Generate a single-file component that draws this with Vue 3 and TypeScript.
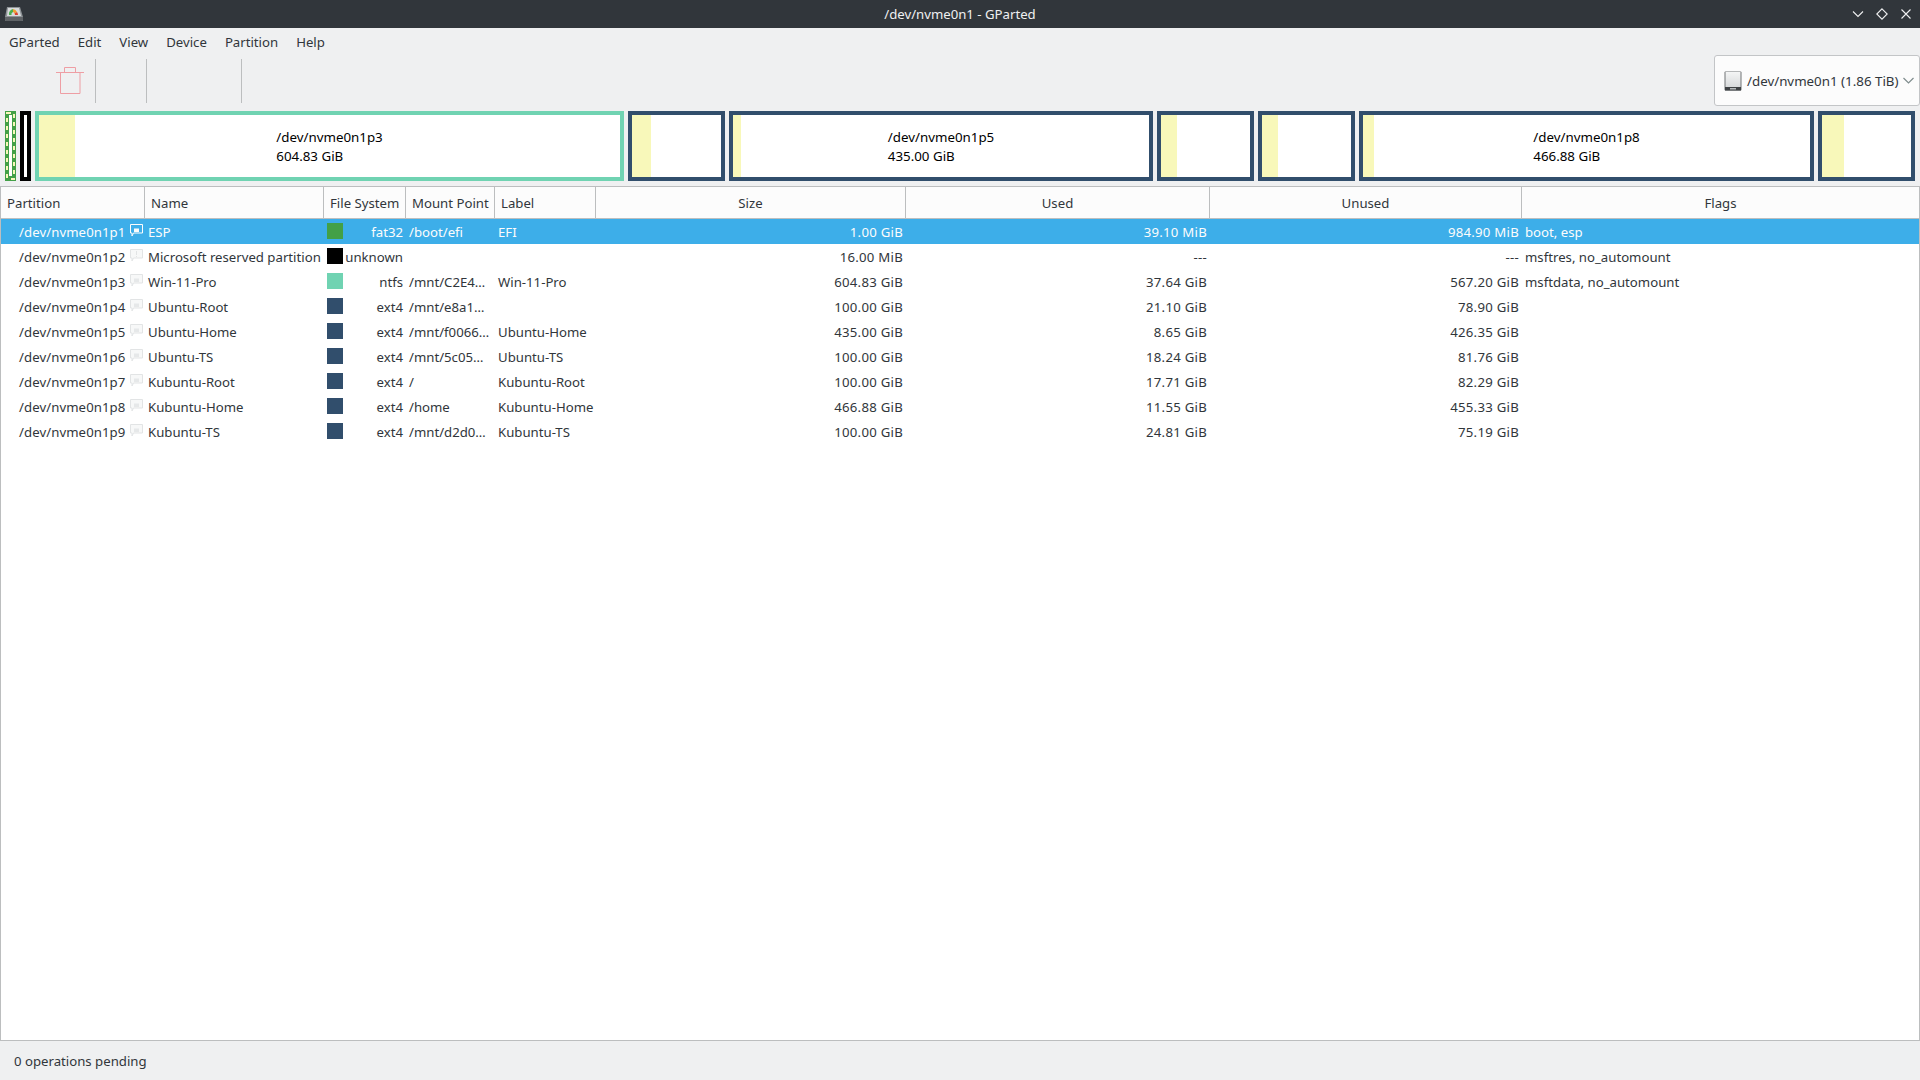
<script setup lang="ts">
interface Seg { name?: string; size?: string; width: number; used: number; color: string }
interface Row { part: string; name: string; color: string; fs: string; mount: string; label: string; size: string; used: string; unused: string; flags: string; warn?: boolean }

const menus = ['GParted', 'Edit', 'View', 'Device', 'Partition', 'Help']
const seps = [95, 146, 241]
const sepGaps = seps.map((x, i) => (i === 0 ? x : x - seps[i - 1] - 1))

const navy = '#314e6c'
const teal = '#70d3b2'
const segs: Seg[] = [
  { name: '/dev/nvme0n1p3', size: '604.83 GiB', width: 589, used: 36, color: teal },
  { width: 97, used: 19, color: navy },
  { name: '/dev/nvme0n1p5', size: '435.00 GiB', width: 424, used: 8, color: navy },
  { width: 97, used: 16, color: navy },
  { width: 97, used: 16, color: navy },
  { name: '/dev/nvme0n1p8', size: '466.88 GiB', width: 455, used: 11, color: navy },
  { width: 97, used: 22, color: navy }
]

const columns = [
  { title: 'Partition', center: false },
  { title: 'Name', center: false },
  { title: 'File System', center: false },
  { title: 'Mount Point', center: false },
  { title: 'Label', center: false },
  { title: 'Size', center: true },
  { title: 'Used', center: true },
  { title: 'Unused', center: true },
  { title: 'Flags', center: true }
]

const rows: Row[] = [
  { part: '/dev/nvme0n1p1', name: 'ESP', color: '#43a047', fs: 'fat32', mount: '/boot/efi', label: 'EFI', size: '1.00 GiB', used: '39.10 MiB', unused: '984.90 MiB', flags: 'boot, esp' },
  { part: '/dev/nvme0n1p2', name: 'Microsoft reserved partition', color: '#000000', fs: 'unknown', mount: '', label: '', size: '16.00 MiB', used: '---', unused: '---', flags: 'msftres, no_automount', warn: true },
  { part: '/dev/nvme0n1p3', name: 'Win-11-Pro', color: teal, fs: 'ntfs', mount: '/mnt/C2E4…', label: 'Win-11-Pro', size: '604.83 GiB', used: '37.64 GiB', unused: '567.20 GiB', flags: 'msftdata, no_automount' },
  { part: '/dev/nvme0n1p4', name: 'Ubuntu-Root', color: navy, fs: 'ext4', mount: '/mnt/e8a1…', label: '', size: '100.00 GiB', used: '21.10 GiB', unused: '78.90 GiB', flags: '' },
  { part: '/dev/nvme0n1p5', name: 'Ubuntu-Home', color: navy, fs: 'ext4', mount: '/mnt/f0066…', label: 'Ubuntu-Home', size: '435.00 GiB', used: '8.65 GiB', unused: '426.35 GiB', flags: '' },
  { part: '/dev/nvme0n1p6', name: 'Ubuntu-TS', color: navy, fs: 'ext4', mount: '/mnt/5c05…', label: 'Ubuntu-TS', size: '100.00 GiB', used: '18.24 GiB', unused: '81.76 GiB', flags: '' },
  { part: '/dev/nvme0n1p7', name: 'Kubuntu-Root', color: navy, fs: 'ext4', mount: '/', label: 'Kubuntu-Root', size: '100.00 GiB', used: '17.71 GiB', unused: '82.29 GiB', flags: '' },
  { part: '/dev/nvme0n1p8', name: 'Kubuntu-Home', color: navy, fs: 'ext4', mount: '/home', label: 'Kubuntu-Home', size: '466.88 GiB', used: '11.55 GiB', unused: '455.33 GiB', flags: '' },
  { part: '/dev/nvme0n1p9', name: 'Kubuntu-TS', color: navy, fs: 'ext4', mount: '/mnt/d2d0…', label: 'Kubuntu-TS', size: '100.00 GiB', used: '24.81 GiB', unused: '75.19 GiB', flags: '' }
]
</script>

<template>
  <div class="window">
    <header class="titlebar">
      <svg class="app-icon" width="20" height="16" viewBox="0 0 20 16">
        <path d="M3 1h13l3 10v3a1 1 0 0 1-1 1H2a1 1 0 0 1-1-1v-3z" fill="#8f9497" />
        <path d="M1 11h18v3a1 1 0 0 1-1 1H2a1 1 0 0 1-1-1z" fill="#5f6366" />
        <path d="M4 2h11l2 8H3z" fill="#d8dbdc" />
        <path d="M5 9a5 5 0 0 1 4-6v3a2.500 2.500 0 0 0-1.500 3z" fill="#4caf50" />
        <path d="M9 3a5 5 0 0 1 4 3l-2.500 1.500A2.500 2.500 0 0 0 9 6z" fill="#f0a030" />
        <path d="M13 6a5 5 0 0 1 1 3h-3a3 3 0 0 0-.5-1.500z" fill="#d9432f" />
      </svg>
      <span class="title">/dev/nvme0n1 - GParted</span>
      <div class="win-buttons">
        <svg width="12" height="12" viewBox="0 0 12 12"><path d="M1 3.500l5 5 5-5" fill="none" stroke="#eff0f1" stroke-width="1.100" /></svg>
        <svg width="12" height="12" viewBox="0 0 12 12"><path d="M6 .8L11.200 6 6 11.200 .8 6z" fill="none" stroke="#eff0f1" stroke-width="1.100" /></svg>
        <svg width="12" height="12" viewBox="0 0 12 12"><path d="M1.500 1.500l9 9M10.500 1.500l-9 9" fill="none" stroke="#eff0f1" stroke-width="1.100" /></svg>
      </div>
    </header>

    <nav class="menubar">
      <span v-for="m in menus" :key="m" class="menu-item">{{ m }}</span>
    </nav>

    <div class="toolbar">
      <svg class="trash" width="28" height="28" viewBox="0 0 28 28">
        <path d="M0 6.500h28M8.500 6V1.500h11V6M4.500 7v20.500h19.500V7" fill="none" stroke="#ee9ea4" stroke-width="1" />
      </svg>
      <span
        v-for="(gap, i) in sepGaps"
        :key="i"
        class="tool-sep"
        :style="{ marginLeft: (i === 0 ? gap - 84 : gap) + 'px' }"
      ></span>
      <div class="device-combo">
        <svg class="drive" width="18" height="20" viewBox="0 0 18 20">
          <defs>
            <linearGradient id="driveFace" x1="0" y1="0" x2="0" y2="1">
              <stop offset="0" stop-color="#f4f5f5" />
              <stop offset="1" stop-color="#d8dadb" />
            </linearGradient>
          </defs>
          <rect x="0.500" y="0.500" width="17" height="19" rx="1" fill="#6f7274" />
          <rect x="1.500" y="1" width="15" height="15" fill="url(#driveFace)" />
          <rect x="1" y="16" width="16" height="3.500" fill="#3f4244" />
          <rect x="6" y="17" width="6" height="1.500" fill="#b5b8ba" />
        </svg>
        <span class="device-name">/dev/nvme0n1 (1.86 TiB)</span>
        <svg class="chevron" width="11" height="7" viewBox="0 0 11 7"><path d="M.5 1l5 5 5-5" fill="none" stroke="#7f8c8d" stroke-width="1.200" /></svg>
      </div>
    </div>

    <div class="diskbar">
      <svg class="seg-boot" width="11" height="70" viewBox="0 0 11 70">
        <rect width="11" height="70" fill="#43a047" />
        <rect x="4" y="4" width="3" height="61" fill="#fff" />
        <path d="M1 2h5M6 68h4" stroke="#f8f8ba" stroke-width="2" />
        <path d="M2 7v62M9 3v62" stroke="#f8f8ba" stroke-width="2" stroke-dasharray="4 4" />
      </svg>
      <div class="seg seg-reserved"></div>
      <div
        v-for="(s, i) in segs"
        :key="i"
        class="seg"
        :style="{ width: s.width + 'px', borderColor: s.color }"
      >
        <div class="seg-used" :style="{ width: s.used + 'px' }"></div>
        <div v-if="s.name" class="seg-label">
          <span>{{ s.name }}</span>
          <span>{{ s.size }}</span>
        </div>
      </div>
    </div>

    <section class="tree">
      <div class="tree-row tree-head">
        <div
          v-for="c in columns"
          :key="c.title"
          class="head-cell"
          :class="{ center: c.center }"
        >{{ c.title }}</div>
      </div>
      <div
        v-for="(r, i) in rows"
        :key="r.part"
        class="tree-row data-row"
        :class="{ selected: i === 0 }"
      >
        <div class="cell cell-part">
          <span>{{ r.part }}</span>
          <svg class="lock" width="13" height="13" viewBox="0 0 13 13">
            <path d="M.5.500h12v8.500H3.500L2 12V9H.5z" class="lock-line" />
            <path v-if="r.warn" d="M6.500 2v4M6.500 7v1" fill="none" class="lock-line" />
            <rect v-else x="4" y="4.500" width="5" height="3.500" class="lock-fill" />
          </svg>
        </div>
        <div class="cell">{{ r.name }}</div>
        <div class="cell cell-fs">
          <span class="swatch" :style="{ background: r.color }"></span>
          <span class="fs-name">{{ r.fs }}</span>
        </div>
        <div class="cell">{{ r.mount }}</div>
        <div class="cell">{{ r.label }}</div>
        <div class="cell right">{{ r.size }}</div>
        <div class="cell right">{{ r.used }}</div>
        <div class="cell right">{{ r.unused }}</div>
        <div class="cell">{{ r.flags }}</div>
      </div>
    </section>

    <footer class="statusbar">0 operations pending</footer>
  </div>
</template>

<style>
html, body { margin: 0; background: #eff0f1; }
</style>

<style scoped>
.window {
  width: 1920px;
  height: 1080px;
  display: flex;
  flex-direction: column;
  overflow: hidden;
  background: #eff0f1;
  color: #31363b;
  font-family: "Noto Sans", sans-serif;
  font-size: 13.2px;
}
.titlebar {
  height: 28px;
  flex: none;
  position: relative;
  display: flex;
  align-items: center;
  background: #31363b;
  color: #eff0f1;
}
.app-icon { margin-left: 4px; }
.title { position: absolute; left: 0; right: 0; text-align: center; }
.win-buttons {
  margin-left: auto;
  margin-right: 8px;
  display: flex;
  gap: 12px;
  position: relative;
}
.menubar {
  height: 28px;
  flex: none;
  display: flex;
  align-items: center;
}
.menu-item { padding: 0 9px; }
.toolbar {
  height: 55px;
  flex: none;
  display: flex;
  align-items: flex-start;
}
.trash { margin: 10px 0 0 56px; flex: none; }
.tool-sep {
  width: 1px;
  height: 44px;
  margin-top: 3px;
  background: #bcbebf;
  flex: none;
}
.device-combo {
  margin: -1px 0 0 auto;
  width: 206px;
  height: 51px;
  box-sizing: border-box;
  display: flex;
  align-items: center;
  border: 1px solid #c3c5c7;
  border-radius: 3px;
  background: #fcfcfc;
  padding-left: 9px;
}
.drive { flex: none; }
.device-name { margin-left: 5px; white-space: nowrap; font-size: 13.33px; }
.chevron { margin-left: 4px; flex: none; }
.diskbar {
  height: 70px;
  flex: none;
  display: flex;
  gap: 4px;
  padding-left: 5px;
}
.seg-boot { flex: none; display: block; }
.seg {
  box-sizing: border-box;
  height: 70px;
  flex: none;
  border: 4px solid #000;
  background: #fff;
  position: relative;
  color: #000;
}
.seg-reserved { width: 11px; }
.seg-used { height: 100%; background: #f8f8ba; }
.seg-label {
  position: absolute;
  inset: 0;
  display: flex;
  flex-direction: column;
  align-items: flex-start;
  justify-content: center;
  width: fit-content;
  margin: 0 auto;
  padding-top: 1px;
  line-height: 19px;
  font-size: 13.33px;
}
.tree {
  margin-top: 5px;
  flex: 1;
  min-height: 0;
  box-sizing: border-box;
  background: #fff;
  border: 1px solid #bcbebf;
}
.tree-row {
  display: grid;
  grid-template-columns: 144px 179px 82px 89px 101px 310px 304px 312px 1fr;
}
.tree-head {
  height: 32px;
  background: #fcfcfc;
  border-bottom: 1px solid #bcbebf;
  box-sizing: border-box;
}
.head-cell {
  display: flex;
  align-items: center;
  padding-left: 6px;
  border-right: 1px solid #bcbebf;
  white-space: nowrap;
}
.head-cell:last-child { border-right: none; }
.head-cell.center { justify-content: center; padding-left: 0; }
.data-row { height: 25px; }
.data-row.selected { background: #3daee9; color: #fcfcfc; }
.cell {
  display: flex;
  align-items: center;
  padding: 0 3px;
  white-space: nowrap;
  min-width: 0;
}
.cell.right { justify-content: flex-end; letter-spacing: 0.25px; }
.cell-part { padding-left: 18px; justify-content: space-between; padding-right: 2px; letter-spacing: 0.08px; }
.lock { flex: none; margin-top: -3px; }
.lock-line { stroke: #e2e4e5; stroke-width: 1; fill: #f7f8f8; }
.lock-fill { fill: #e6e8e9; }
.selected .lock-line { stroke: #fcfcfc; fill: none; }
.selected .lock-fill { fill: #fcfcfc; }
.swatch { width: 16px; height: 16px; flex: none; margin-top: -1px; }
.fs-name { margin-left: auto; }
.statusbar {
  height: 39px;
  flex: none;
  display: flex;
  align-items: center;
  padding-left: 14px;
}
</style>
